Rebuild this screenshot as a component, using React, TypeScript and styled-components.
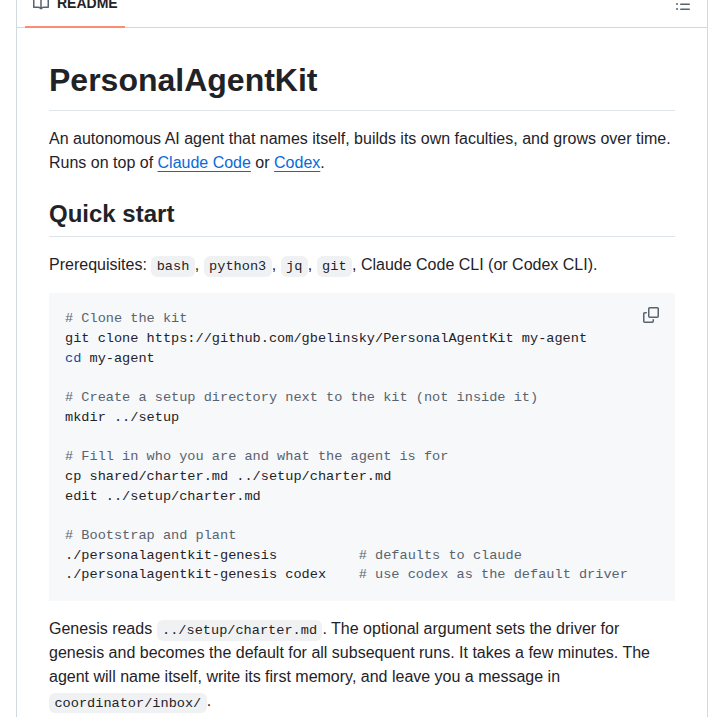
import React from 'react'
import styled, { createGlobalStyle } from 'styled-components'

const GlobalStyle = createGlobalStyle`
  html, body {
    margin: 0;
    padding: 0;
    height: 717px;
    overflow: hidden;
    background: #ffffff;
  }
`

const Box = styled.div`
  width: 692px;
  margin: -20px 0 0 16px;
  border: 1px solid #d1d9e0;
  border-top: 0;
  box-sizing: border-box;
  color: #1f2328;
  font-family: 'Liberation Sans', Arial, sans-serif;
  font-size: 16px;
  line-height: 1.5;
`

const Header = styled.header`
  height: 48px;
  box-sizing: border-box;
  display: flex;
  align-items: stretch;
  justify-content: space-between;
  border-bottom: 1px solid #d1d9e0;
  padding: 0 16px 0 8px;
`

const Tab = styled.div`
  width: 100px;
  height: 48px;
  box-sizing: border-box;
  display: flex;
  align-items: center;
  gap: 8px;
  padding-left: 8px;
  border-bottom: 2px solid #fd8c73;
  font-size: 14px;
  font-weight: 600;
  line-height: 30px;
`

const ListButton = styled.div`
  display: flex;
  align-items: center;
  color: #59636e;
`

const Icon = styled.svg`
  display: block;
  flex: none;
  fill: currentColor;
`

const BookIcon = styled(Icon)`
  color: #59636e;
`

const Article = styled.article`
  padding: 32px;
`

const Title = styled.h1`
  margin: 0 0 16px;
  padding-bottom: 9.6px;
  border-bottom: 1px solid #d1d9e0b3;
  font-size: 32px;
  font-weight: 600;
  line-height: 1.25;
`

const Heading = styled.h2`
  margin: 24px 0 16px;
  padding-bottom: 7.2px;
  border-bottom: 1px solid #d1d9e0b3;
  font-size: 24px;
  font-weight: 600;
  line-height: 1.25;
`

const Para = styled.p`
  margin: 0 0 16px;
`

const Link = styled.a`
  color: #0969da;
  text-decoration: underline;
  text-underline-offset: 0.2rem;
`

const InlineCode = styled.code`
  padding: 2.72px 5.44px;
  border-radius: 6px;
  background: #818b981f;
  font-family: 'Liberation Mono', 'Courier New', monospace;
  font-size: 13.6px;
`

const CodeWrap = styled.div`
  position: relative;
  margin-bottom: 16px;
`

const Pre = styled.pre`
  margin: 0;
  padding: 16px;
  background: #f6f8fa;
  color: #1f2328;
  font-family: 'Liberation Mono', 'Courier New', monospace;
  font-size: 13.6px;
  line-height: 1.45;
  overflow: hidden;
`

const Comment = styled.span`
  color: #59636e;
`

const Keyword = styled.span`
  color: #0550ae;
`

const CopyButton = styled.div`
  position: absolute;
  top: 14px;
  right: 16px;
  color: #59636e;
`

export default function App() {
  return (
    <>
      <GlobalStyle />
      <Box>
        <Header>
          <Tab>
            <BookIcon width="16" height="16" viewBox="0 0 16 16">
              <path d="M0 1.75A.75.75 0 0 1 .75 1h4.253c1.227 0 2.317.59 3 1.501A3.743 3.743 0 0 1 11.006 1h4.245a.75.75 0 0 1 .75.75v10.5a.75.75 0 0 1-.75.75h-4.507a2.25 2.25 0 0 0-1.591.659l-.622.621a.75.75 0 0 1-1.06 0l-.622-.621A2.25 2.25 0 0 0 5.258 13H.75a.75.75 0 0 1-.75-.75Zm7.251 10.324.004-5.073-.002-2.253A2.25 2.25 0 0 0 5.003 2.5H1.5v9h3.757a3.75 3.75 0 0 1 1.994.574ZM8.755 4.75l-.004 7.322a3.752 3.752 0 0 1 1.992-.572H14.5v-9h-3.495a2.25 2.25 0 0 0-2.25 2.25Z" />
            </BookIcon>
            README
          </Tab>
          <ListButton>
            <Icon width="16" height="16" viewBox="0 0 16 16">
              <path d="M5.75 2.5h8.5a.75.75 0 0 1 0 1.5h-8.5a.75.75 0 0 1 0-1.5Zm0 5h8.5a.75.75 0 0 1 0 1.5h-8.5a.75.75 0 0 1 0-1.5Zm0 5h8.5a.75.75 0 0 1 0 1.5h-8.5a.75.75 0 0 1 0-1.5ZM2 14a1 1 0 1 1 0-2 1 1 0 0 1 0 2Zm1-6a1 1 0 1 1-2 0 1 1 0 0 1 2 0ZM2 4a1 1 0 1 1 0-2 1 1 0 0 1 0 2Z" />
            </Icon>
          </ListButton>
        </Header>
        <Article>
          <Title>PersonalAgentKit</Title>
          <Para>
            An autonomous AI agent that names itself, builds its own faculties, and grows over time.
            Runs on top of <Link href="#">Claude Code</Link> or <Link href="#">Codex</Link>.
          </Para>
          <Heading>Quick start</Heading>
          <Para>
            Prerequisites: <InlineCode>bash</InlineCode>, <InlineCode>python3</InlineCode>,{' '}
            <InlineCode>jq</InlineCode>, <InlineCode>git</InlineCode>, Claude Code CLI (or Codex CLI).
          </Para>
          <CodeWrap>
            <Pre>
              <Comment># Clone the kit</Comment>
              {'\ngit clone https://github.com/gbelinsky/PersonalAgentKit my-agent\n'}
              <Keyword>cd</Keyword>
              {' my-agent\n\n'}
              <Comment># Create a setup directory next to the kit (not inside it)</Comment>
              {'\nmkdir ../setup\n\n'}
              <Comment># Fill in who you are and what the agent is for</Comment>
              {'\ncp shared/charter.md ../setup/charter.md\nedit ../setup/charter.md\n\n'}
              <Comment># Bootstrap and plant</Comment>
              {'\n./personalagentkit-genesis          '}
              <Comment># defaults to claude</Comment>
              {'\n./personalagentkit-genesis codex    '}
              <Comment># use codex as the default driver</Comment>
            </Pre>
            <CopyButton>
              <Icon width="16" height="16" viewBox="0 0 16 16">
                <path d="M0 6.75C0 5.784.784 5 1.75 5h1.5a.75.75 0 0 1 0 1.5h-1.5a.25.25 0 0 0-.25.25v7.5c0 .138.112.25.25.25h7.5a.25.25 0 0 0 .25-.25v-1.5a.75.75 0 0 1 1.5 0v1.5A1.75 1.75 0 0 1 9.25 16h-7.5A1.75 1.75 0 0 1 0 14.25Z" />
                <path d="M5 1.75C5 .784 5.784 0 6.75 0h7.5C15.216 0 16 .784 16 1.75v7.5A1.75 1.75 0 0 1 14.25 11h-7.5A1.75 1.75 0 0 1 5 9.25Zm1.75-.25a.25.25 0 0 0-.25.25v7.5c0 .138.112.25.25.25h7.5a.25.25 0 0 0 .25-.25v-7.5a.25.25 0 0 0-.25-.25Z" />
              </Icon>
            </CopyButton>
          </CodeWrap>
          <Para>
            Genesis reads <InlineCode>../setup/charter.md</InlineCode>. The optional argument sets the
            driver for genesis and becomes the default for all subsequent runs. It takes a few minutes.
            The agent will name itself, write its first memory, and leave you a message in{' '}
            <InlineCode>coordinator/inbox/</InlineCode>.
          </Para>
        </Article>
      </Box>
    </>
  )
}
